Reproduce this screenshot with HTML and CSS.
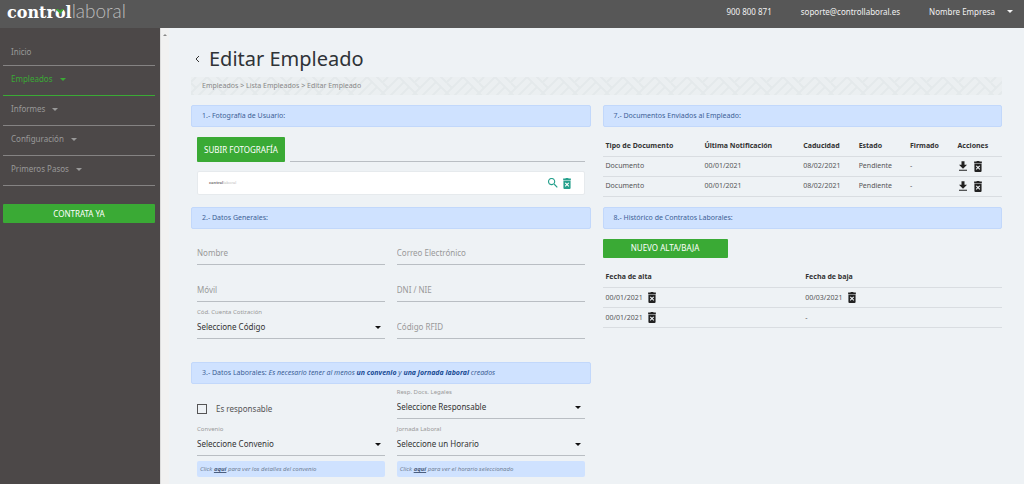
FILE: index.html
```html
<!DOCTYPE html>
<html lang="es">
<head>
<meta charset="utf-8">
<meta name="viewport" content="width=device-width, initial-scale=1">
<title>Editar Empleado - Control Laboral</title>
<link rel="stylesheet" href="styles.css">
</head>
<body>
<svg class="sprite" aria-hidden="true">
  <symbol id="caret" viewBox="0 0 10 5"><path d="M0 0h10L5 5z"/></symbol>
  <symbol id="trash" viewBox="5 2 14 20"><path fill-rule="evenodd" d="M5 3h4l1-1h4l1 1h4v3H5zM5.500 7h13v13a2 2 0 0 1-2 2h-9a2 2 0 0 1-2-2zM8 11.500L10.600 14 8 16.600 9.400 18l2.600-2.600 2.600 2.600 1.400-1.400-2.600-2.600 2.600-2.500-1.400-1.400-2.600 2.500-2.600-2.500z"/></symbol>
  <symbol id="download" viewBox="4 2 16 19"><path d="M20 9h-5V2H9v7H4l8 8zM4 19v2h16v-2z"/></symbol>
  <symbol id="search" viewBox="3 3 18 18"><path d="M15.500 14h-.8l-.3-.3A6.500 6.500 0 1 0 13.700 14.400l.3.3v.8l5 5 1.500-1.500zM9.500 14a4.500 4.500 0 1 1 0-9 4.500 4.500 0 0 1 0 9z"/></symbol>
</svg>
<header class="topbar">
  <a class="logo" href="#"><span class="logo__control">contr<span class="logo__o">o<svg class="logo__mark" viewBox="0 0 8 6" aria-hidden="true"><path fill="#575757" d="M0 0h8L6 4H2z"/><path fill="#3aaa35" d="M0 1h2l2 2 2-2h2L4 6z"/></svg></span>l</span><span class="logo__laboral">laboral</span></a>
  <div class="topbar__info">
    <span>900 800 871</span>
    <a href="#">soporte@controllaboral.es</a>
    <button class="company" type="button">Nombre Empresa <svg class="caret"><use href="#caret"/></svg></button>
  </div>
</header>
<div class="shell">
  <nav class="sidebar">
    <a class="nav-item nav-item--plain" href="#">Inicio</a>
    <a class="nav-item nav-item--active" href="#">Empleados <svg class="caret"><use href="#caret"/></svg></a>
    <a class="nav-item" href="#">Informes <svg class="caret"><use href="#caret"/></svg></a>
    <a class="nav-item" href="#">Configuración <svg class="caret"><use href="#caret"/></svg></a>
    <a class="nav-item" href="#">Primeros Pasos <svg class="caret"><use href="#caret"/></svg></a>
    <button class="btn btn--hire" type="button">CONTRATA YA</button>
  </nav>
  <div class="rail"><svg viewBox="0 0 4 2" aria-hidden="true"><path d="M0 2l2-2 2 2z"/></svg></div>
  <main class="main">
    <div class="title">
      <a href="#" aria-label="Volver"><svg class="back" viewBox="0 0 5 8"><path d="M4 1L1 4l3 3"/></svg></a>
      <h1>Editar Empleado</h1>
    </div>
    <div class="crumbs">
      <svg class="crumbs__pattern" aria-hidden="true">
        <defs><pattern id="weave" width="32" height="32" patternUnits="userSpaceOnUse">
          <path d="M0 16L16 0M5 21L21 5M10 26l16-16M16 0l16 16M21 -5l11 11M0 6l5 5M0 16l10 10M-5 21l16 16M16 32l16-16M21 37l11-11M0 5l5-5M0 26l6 6"/>
        </pattern></defs>
        <rect width="100%" height="100%" fill="url(#weave)"/>
      </svg>
      <span>Empleados &gt; Lista Empleados &gt; Editar Empleado</span>
    </div>
    <div class="columns">
      <form class="column">
        <h2 class="bar">1.- Fotografía de Usuario:</h2>
        <div class="upload">
          <button class="btn btn--upload" type="button">SUBIR FOTOGRAFÍA</button>
          <input class="upload__file" type="text" aria-label="Archivo de fotografía">
        </div>
        <div class="photo">
          <span class="photo__name"><b>control</b>laboral</span>
          <button class="icon-btn" type="button" aria-label="Ver"><svg class="icon icon--search"><use href="#search"/></svg></button>
          <button class="icon-btn" type="button" aria-label="Eliminar"><svg class="icon icon--trash"><use href="#trash"/></svg></button>
        </div>
        <h2 class="bar">2.- Datos Generales:</h2>
        <div class="fields fields--general">
          <div class="field"><input type="text" placeholder="Nombre" aria-label="Nombre"></div>
          <div class="field"><input type="text" placeholder="Correo Electrónico" aria-label="Correo Electrónico"></div>
          <div class="field"><input type="text" placeholder="Móvil" aria-label="Móvil"></div>
          <div class="field"><input type="text" placeholder="DNI / NIE" aria-label="DNI / NIE"></div>
          <div class="field"><label for="cuenta">Cód. Cuenta Cotización</label><select id="cuenta"><option>Seleccione Código</option></select><svg class="caret"><use href="#caret"/></svg></div>
          <div class="field"><input type="text" placeholder="Código RFID" aria-label="Código RFID"></div>
        </div>
        <h2 class="bar">3.- Datos Laborales: <em>Es necesario tener al menos <b>un convenio</b> y <b>una jornada laboral</b> creados</em></h2>
        <div class="fields">
          <label class="check"><input type="checkbox">Es responsable</label>
          <div class="field"><label for="resp">Resp. Docs. Legales</label><select id="resp"><option>Seleccione Responsable</option></select><svg class="caret"><use href="#caret"/></svg></div>
          <div class="field"><label for="convenio">Convenio</label><select id="convenio"><option>Seleccione Convenio</option></select><svg class="caret"><use href="#caret"/></svg></div>
          <div class="field"><label for="jornada">Jornada Laboral</label><select id="jornada"><option>Seleccione un Horario</option></select><svg class="caret"><use href="#caret"/></svg></div>
          <p class="note">Click <a href="#">aquí</a> para ver los detalles del convenio</p>
          <p class="note">Click <a href="#">aquí</a> para ver el horario seleccionado</p>
        </div>
      </form>
      <section class="column">
        <h2 class="bar">7.- Documentos Enviados al Empleado:</h2>
        <table class="table table--docs">
          <colgroup><col class="c-type"><col class="c-type"><col class="c-date"><col class="c-state"><col class="c-small"><col class="c-small"></colgroup>
          <thead><tr><th>Tipo de Documento</th><th>Última Notificación</th><th>Caducidad</th><th>Estado</th><th>Firmado</th><th>Acciones</th></tr></thead>
          <tbody>
            <tr><td>Documento</td><td>00/01/2021</td><td>08/02/2021</td><td>Pendiente</td><td>-</td><td><div class="actions"><button class="icon-btn" type="button" aria-label="Descargar"><svg class="icon icon--download"><use href="#download"/></svg></button><button class="icon-btn" type="button" aria-label="Eliminar"><svg class="icon icon--trash"><use href="#trash"/></svg></button></div></td></tr>
            <tr><td>Documento</td><td>00/01/2021</td><td>08/02/2021</td><td>Pendiente</td><td>-</td><td><div class="actions"><button class="icon-btn" type="button" aria-label="Descargar"><svg class="icon icon--download"><use href="#download"/></svg></button><button class="icon-btn" type="button" aria-label="Eliminar"><svg class="icon icon--trash"><use href="#trash"/></svg></button></div></td></tr>
          </tbody>
        </table>
        <h2 class="bar">8.- Histórico de Contratos Laborales:</h2>
        <button class="btn btn--new" type="button">NUEVO ALTA/BAJA</button>
        <table class="table">
          <thead><tr><th>Fecha de alta</th><th>Fecha de baja</th></tr></thead>
          <tbody>
            <tr><td><div class="dated">00/01/2021<button class="icon-btn" type="button" aria-label="Eliminar alta"><svg class="icon icon--trash"><use href="#trash"/></svg></button></div></td><td><div class="dated">00/03/2021<button class="icon-btn" type="button" aria-label="Eliminar baja"><svg class="icon icon--trash"><use href="#trash"/></svg></button></div></td></tr>
            <tr><td><div class="dated">00/01/2021<button class="icon-btn" type="button" aria-label="Eliminar alta"><svg class="icon icon--trash"><use href="#trash"/></svg></button></div></td><td>-</td></tr>
          </tbody>
        </table>
      </section>
    </div>
  </main>
</div>
</body>
</html>
```
FILE: styles.css
```css
* { box-sizing: border-box; }
body {
  margin: 0;
  min-height: 100vh;
  display: flex;
  flex-direction: column;
  background: #eef2f5;
  color: #555;
  font: 8px/12px "Noto Sans", "Open Sans", sans-serif;
}
a { color: inherit; text-decoration: none; }
button, input, select { font: inherit; color: inherit; margin: 0; padding: 0; border: 0; background: none; border-radius: 0; }
button { cursor: pointer; }
h1, h2, p { margin: 0; font-weight: 400; }
.sprite { position: absolute; width: 0; height: 0; }
.caret { width: 6px; height: 3px; fill: currentColor; }

.topbar {
  display: flex;
  justify-content: space-between;
  height: 28px;
  padding: 0 11px 0 7px;
  background: #575757;
  color: #f2f2f2;
}
.logo { display: flex; align-items: baseline; line-height: 22px; color: #fff; }
.logo__control { font-family: "DejaVu Serif", serif; font-weight: 700; font-size: 16px; }
.logo__laboral { font-family: Lato, sans-serif; font-weight: 300; font-size: 19px; color: #bbb; }
.logo__o { position: relative; }
.logo__mark { position: absolute; left: 1px; top: 5px; width: 8px; height: 6px; }
.topbar__info { display: flex; align-items: center; gap: 29px; height: 23px; }
.company { display: flex; align-items: center; gap: 12px; }

.shell { flex: 1; display: flex; }
.sidebar {
  flex: 0 0 160px;
  display: flex;
  flex-direction: column;
  padding: 11px 5px 0 3px;
  background: #4c4848;
  color: #999;
}
.nav-item {
  display: flex;
  align-items: center;
  gap: 7px;
  height: 30px;
  padding: 0 8px 3px;
  border-bottom: 1px solid #858383;
}
.nav-item--plain { height: 27px; padding-bottom: 0; }
.nav-item--active { color: #3aaa35; border-color: #3aaa35; }
.btn { background: #3aaa35; color: #fff; border-radius: 1px; text-align: center; }
.btn--hire { height: 19px; margin-top: 18px; }
.rail { flex: 0 0 9px; padding: 5px 2px; background: #f1f1f1; border-left: 1px solid #ddd; line-height: 0; }
.rail svg { width: 4px; height: 2px; fill: #888; }

.main { flex: 1; min-width: 0; padding: 17px 22px 7px; }
.title { display: flex; align-items: center; gap: 9px; padding-left: 4px; }
.title h1 { font-size: 20px; line-height: 28px; color: #2f3337; }
.title a { display: flex; }
.back { width: 5px; height: 8px; fill: none; stroke: #333; stroke-width: 1; }
.crumbs { position: relative; margin-top: 4px; padding: 3px 11px; color: #888; background: #ebeff1; font-size: 7px; }
.crumbs span { position: relative; }
.crumbs__pattern { position: absolute; inset: 0; width: 100%; height: 100%; }
.crumbs__pattern path { fill: none; stroke: #e4e9eb; stroke-width: 2; }
.columns { display: grid; grid-template-columns: 1fr 1fr; gap: 12px; margin-top: 10px; }
.column { min-width: 0; }
.bar {
  padding: 4px 10px;
  border: 1px solid #c2d8fb;
  border-radius: 2px;
  background: #cfe2ff;
  color: #3c5f96;
  font-size: 7px;
  line-height: 12px;
}
.bar b { color: #174a94; }

.upload { display: flex; gap: 5px; margin: 10px 6px 0; }
.btn--upload { width: 88px; height: 25px; }
.upload__file { flex: 1; min-width: 0; border-bottom: 1px solid #b9bec3; }
.photo {
  display: flex;
  align-items: center;
  gap: 5px;
  height: 24px;
  margin: 9px 6px 12px;
  padding: 0 13px 0 11px;
  border: 1px solid #e6eaed;
  border-radius: 2px;
  background: #fff;
  color: #26a08c;
}
.photo__name { flex: 1; font-size: 4px; color: #bbb; }
.photo__name b { color: #777; }
.icon-btn { display: flex; }
.icon { display: block; fill: currentColor; }
.icon--trash { width: 8px; height: 11px; }
.icon--download { width: 8px; height: 10px; }
.icon--search { width: 10px; height: 10px; }

.fields { display: grid; grid-template-columns: 1fr 1fr; gap: 2px 12px; padding: 0 6px; }
.fields--general { padding-bottom: 23px; padding-top: 1px; }
.field { position: relative; display: flex; flex-direction: column; justify-content: flex-end; height: 35px; }
.field label { font-size: 6px; line-height: 10px; color: #999; }
.field input, .field select { width: 100%; height: 22px; border-bottom: 1px solid #b9bec3; }
.field input { padding-bottom: 2px; }
.field select { appearance: none; padding-bottom: 1px; color: #333; }
.field input::placeholder { color: #999; opacity: 1; }
.field .caret { position: absolute; right: 4px; bottom: 10px; color: #111; pointer-events: none; }
.check { display: flex; align-items: center; gap: 9px; padding-top: 14px; color: #555; }
.check input { appearance: none; width: 10px; height: 10px; border: 1px solid #555; }
.note {
  margin-top: 3px;
  padding: 2px 3px;
  border-radius: 2px;
  background: #cfe2ff;
  font-size: 6px;
  font-style: italic;
  color: #6f7f96;
}
.note a { font-weight: 700; text-decoration: underline; color: #4b5f7f; }

.table { width: 100%; table-layout: fixed; border-collapse: collapse; }
.table th { height: 20px; padding: 0 3px; text-align: left; color: #333; font-size: 7px; font-weight: 700; white-space: nowrap; border-bottom: 1px solid #d9dde1; }
.table td { height: 20px; padding: 0 3px; font-size: 7px; border-bottom: 1px solid #d9dde1; }
.table .icon-btn { color: #222; }
.table--docs { margin: 9px 0 10px; }
.c-type { width: 25%; }
.c-date { width: 14%; }
.c-state { width: 13%; }
.c-small { width: 12%; }
.actions { display: flex; gap: 7px; padding-left: 2px; }
.dated { display: flex; align-items: center; gap: 5px; }
.btn--new { width: 125px; height: 19px; margin: 10px 0; display: block; }
```
